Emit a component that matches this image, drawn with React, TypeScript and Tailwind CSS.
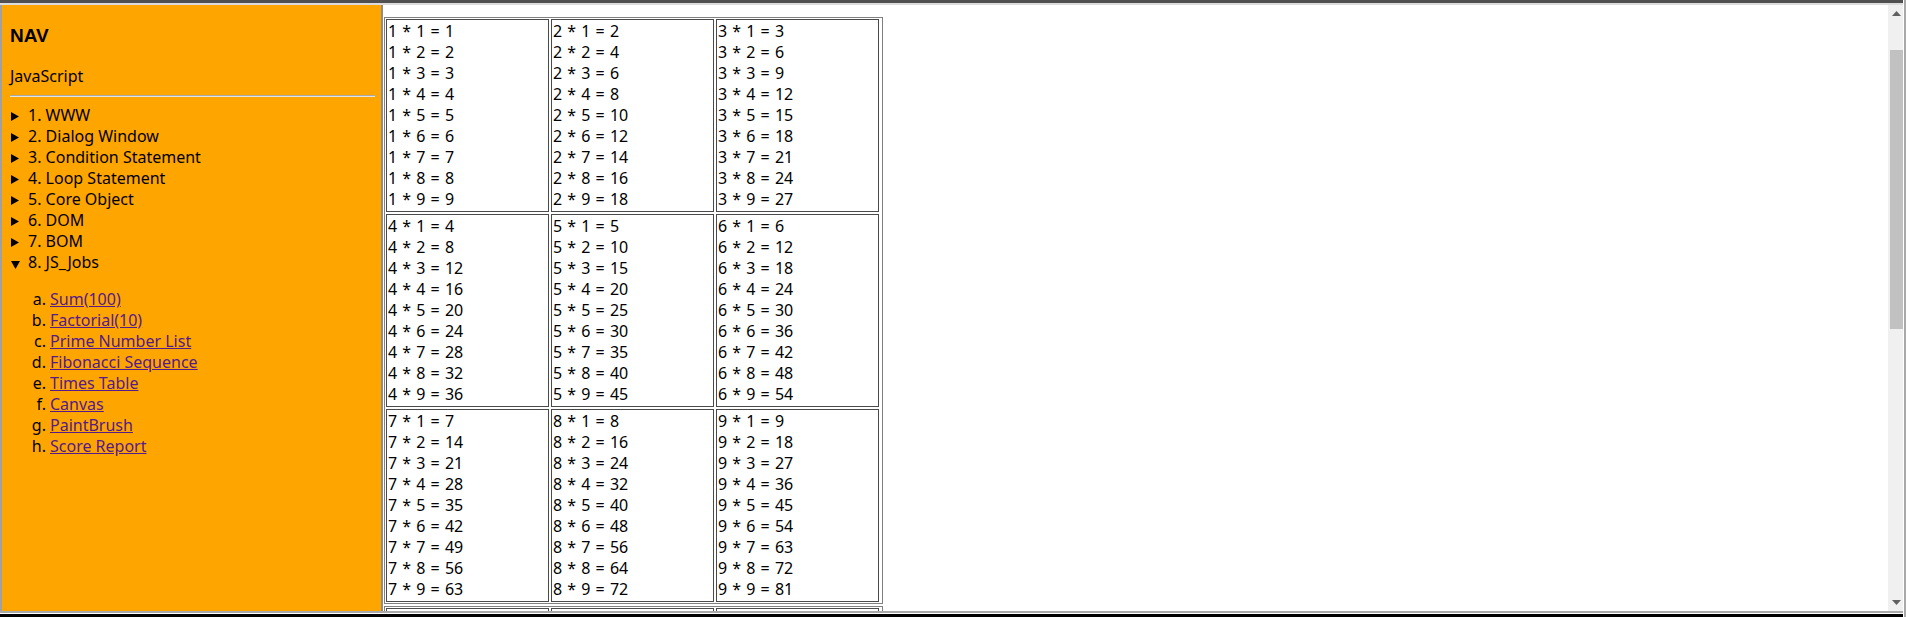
import React from "react";

const navItems = [
  "1. WWW",
  "2. Dialog Window",
  "3. Condition Statement",
  "4. Loop Statement",
  "5. Core Object",
  "6. DOM",
  "7. BOM",
];

const jobs = [
  ["a.", "Sum(100)"],
  ["b.", "Factorial(10)"],
  ["c.", "Prime Number List"],
  ["d.", "Fibonacci Sequence"],
  ["e.", "Times Table"],
  ["f.", "Canvas"],
  ["g.", "PaintBrush"],
  ["h.", "Score Report"],
];

const RightTri = () => (
  <svg width="8" height="9" viewBox="0 0 8 9" className="ml-[1px] mt-[7px] shrink-0">
    <polygon points="0,0 8,4.5 0,9" fill="#000" />
  </svg>
);

const DownTri = () => (
  <svg width="9" height="8" viewBox="0 0 9 8" className="ml-[1px] mt-[9px] shrink-0">
    <polygon points="0,0 9,0 4.5,8" fill="#000" />
  </svg>
);

function Cell({ n, empty }: { n: number; empty?: boolean }) {
  return (
    <div className="border border-[#4a4a4a] p-[1px] h-[193px] overflow-hidden">
      {!empty &&
        Array.from({ length: 9 }, (_, i) => (
          <div key={i} className="leading-[21px] whitespace-pre [word-spacing:1px]">
            {`${n} * ${i + 1} = ${n * (i + 1)}`}
          </div>
        ))}
    </div>
  );
}

function Table({ start, empty }: { start: number; empty?: boolean }) {
  const rows = [0, 1, 2];
  return (
    <div className="w-[499px] border border-[#808080] p-[1px] flex flex-col gap-[2px]">
      {rows.map((r) => (
        <div key={r} className="grid grid-cols-[163px_163px_163px] gap-[2px]">
          {[0, 1, 2].map((c) => (
            <Cell key={c} n={start + r * 3 + c} empty={empty} />
          ))}
        </div>
      ))}
    </div>
  );
}

export default function App() {
  return (
    <div
      className="w-[1907px] h-[617px] flex overflow-hidden bg-white text-black"
      style={{ fontFamily: '"Noto Sans", sans-serif' }}
    >
      <div className="w-[1903px] h-full flex flex-col">
        <div className="h-[3px] bg-[#505050]" />
        <div className="h-[2px] bg-[#dcdcdc]" />
        <div className="flex-1 flex min-h-0">
          <div className="w-[2px] bg-[#a0a0a0]" />
          {/* Left frame */}
          <div className="w-[379px] bg-[#ffa500] pl-[8px] pr-[6px] pt-[20px] text-[16px]">
            <div
              className="h-[22px] leading-[22px] text-[19px] font-bold"
              style={{ fontFamily: '"Liberation Sans", Arial, sans-serif' }}
            >
              NAV
            </div>
            <div className="mt-[19px] leading-[21px]">JavaScript</div>
            <div className="mt-[8px] h-[2px] border-t border-t-[#a8a8a8] border-b border-b-[#e4e4e4]" />
            <div className="mt-[8px]">
              {navItems.map((t) => (
                <div key={t} className="flex leading-[21px]">
                  <RightTri />
                  <span className="ml-[9px]">{t}</span>
                </div>
              ))}
              <div className="flex leading-[21px]">
                <DownTri />
                <span className="ml-[8px]">8. JS_Jobs</span>
              </div>
              <div className="mt-[16px]">
                {jobs.map(([m, t]) => (
                  <div key={m} className="flex leading-[21px]">
                    <span className="w-[40px] pr-[4px] text-right">{m}</span>
                    <a href="#" className="text-[#551a8b] underline">
                      {t}
                    </a>
                  </div>
                ))}
              </div>
            </div>
          </div>
          <div className="w-[2px] bg-[#8c8c8c]" />
          {/* Right frame */}
          <div className="flex-1 flex min-w-0">
            <div className="flex-1 overflow-hidden pt-[12px] pl-[1px] text-[16px]">
              <Table start={1} />
              <div className="mt-[2px]">
                <Table start={10} empty />
              </div>
            </div>
            {/* scrollbar */}
            <div className="w-[15px] bg-[#f0f0f0] flex flex-col items-stretch">
              <div className="h-[17px] flex items-center justify-center pl-[2px]">
                <svg width="9" height="5" viewBox="0 0 9 5">
                  <polygon points="0,5 9,5 4.5,0" fill="#606060" />
                </svg>
              </div>
              <div className="mt-[28px] h-[279px] ml-[2px] bg-[#c1c1c1]" />
              <div className="flex-1" />
              <div className="h-[17px] flex items-center justify-center pl-[2px]">
                <svg width="9" height="5" viewBox="0 0 9 5">
                  <polygon points="0,0 9,0 4.5,5" fill="#606060" />
                </svg>
              </div>
            </div>
          </div>
        </div>
        <div className="h-[2px] bg-[#a9a9a9]" />
        <div className="h-[1px] bg-white" />
        <div className="h-[3px] bg-black" />
      </div>
      <div className="w-[4px] h-full flex">
        <div className="w-[1px] bg-white" />
        <div className="w-[2px] bg-[#a9a9a9]" />
        <div className="w-[1px] bg-white" />
      </div>
    </div>
  );
}
